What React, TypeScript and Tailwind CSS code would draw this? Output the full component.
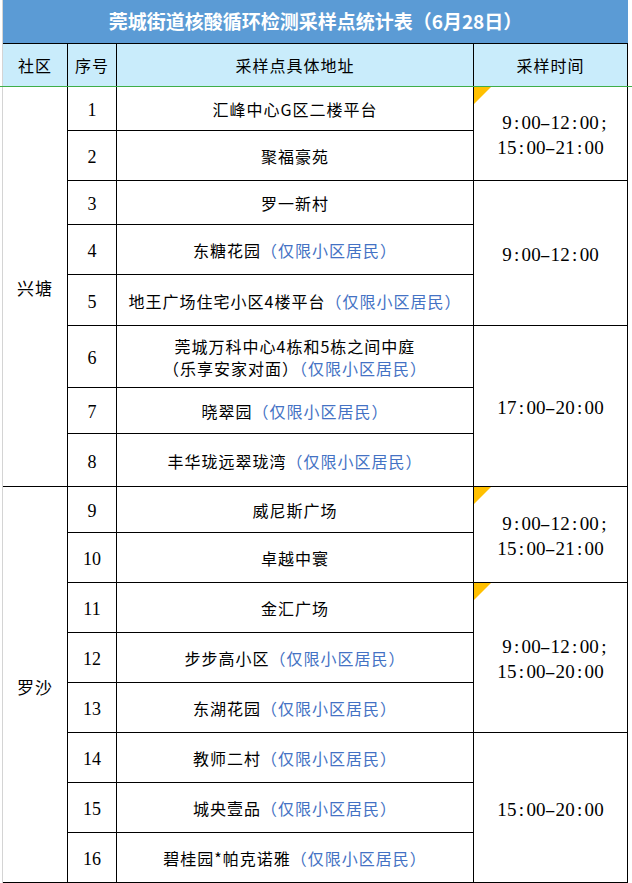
import React from 'react';

type Row = {
	no: number;
	name: string;
	limited?: boolean;
	second?: string;
};

type TimeBlock = {
	span: number;
	lines: string[];
	flag?: boolean;
};

const rows: Row[] = [
	{ no: 1, name: '汇峰中心G区二楼平台' },
	{ no: 2, name: '聚福豪苑' },
	{ no: 3, name: '罗一新村' },
	{ no: 4, name: '东糖花园', limited: true },
	{ no: 5, name: '地王广场住宅小区4楼平台', limited: true },
	{ no: 6, name: '莞城万科中心4栋和5栋之间中庭', second: '（乐享安家对面）', limited: true },
	{ no: 7, name: '晓翠园', limited: true },
	{ no: 8, name: '丰华珑远翠珑湾', limited: true },
	{ no: 9, name: '威尼斯广场' },
	{ no: 10, name: '卓越中寰' },
	{ no: 11, name: '金汇广场' },
	{ no: 12, name: '步步高小区', limited: true },
	{ no: 13, name: '东湖花园', limited: true },
	{ no: 14, name: '教师二村', limited: true },
	{ no: 15, name: '城央壹品', limited: true },
	{ no: 16, name: '碧桂园*帕克诺雅', limited: true },
];

// time cell starts at these row numbers
const times: Record<number, TimeBlock> = {
	1: { span: 2, lines: [' 9:00-12:00;', '15:00-21:00'], flag: true },
	3: { span: 3, lines: ['9:00-12:00'] },
	6: { span: 3, lines: ['17:00-20:00'] },
	9: { span: 2, lines: [' 9:00-12:00;', '15:00-21:00'], flag: true },
	11: { span: 3, lines: [' 9:00-12:00;', '15:00-20:00'], flag: true },
	14: { span: 3, lines: ['15:00-20:00'] },
};

const spanClass: Record<number, string> = {
	2: 'row-span-2',
	3: 'row-span-3',
};

const Mono = ({ text }: { text: string }) => (
	<div className="flex justify-center">
		{text.split('').map((ch, i) => (
			<span
				key={i}
				className="w-[9.7px] text-center"
			>
				{ch === ' ' ? (
					'\u00a0'
				) : ch === '-' ? (
					<span className="inline-block scale-x-[1.7]">-</span>
				) : (
					ch
				)}
			</span>
		))}
	</div>
);

const Flag = () => (
	<svg
		className="absolute left-0 top-0"
		width="17"
		height="17"
		viewBox="0 0 17 17"
	>
		<polygon
			points="0,0 17,0 0,17"
			fill="#ffc000"
		/>
	</svg>
);

const Limited = () => <span className="text-[#4472c4]">（仅限小区居民）</span>;

export default function App() {
	return (
		<div className="w-[632px] h-[883px] bg-white text-black font-['Noto_Sans_CJK_SC',sans-serif] overflow-hidden">
			<div className="flex">
				<div className="w-[2px]" />
				<div className="w-px bg-[#d4d4d4]" />
				<div className="w-[625px]">
					<div className="h-[43px] bg-[#5b9bd5] flex items-center justify-center text-white text-[19px] font-bold">
						莞城街道核酸循环检测采样点统计表（6月28日）
					</div>
					<div className="h-px bg-black" />
					<div className="grid grid-cols-[64px_48px_356px_153px] h-[42px] gap-x-px pr-px bg-black text-[16px] tracking-[1px]">
						<div className="bg-[#c9ecfb] flex items-center justify-center">社区</div>
						<div className="bg-[#c9ecfb] flex items-center justify-center">序号</div>
						<div className="bg-[#c9ecfb] flex items-center justify-center">采样点具体地址</div>
						<div className="bg-[#c9ecfb] flex items-center justify-center">采样时间</div>
					</div>
				</div>
			</div>
			<div className="h-px bg-[#3fae49]" />
			<div className="flex">
				<div className="w-[2px]" />
				<div className="w-px bg-[#d4d4d4]" />
				<div className="grid w-[625px] grid-cols-[64px_48px_356px_153px] grid-rows-[43px_49px_43px_49px_50px_61px_45px_52px_45px_49px_49px_49px_49px_49px_49px_49px] gap-px pr-px pb-px bg-black">
					{rows.map((r) => {
						const t = times[r.no];
						return (
							<React.Fragment key={r.no}>
								{r.no === 1 && (
									<div className="row-span-8 bg-white flex items-center justify-center pt-[3px] text-[17px] tracking-[1px]">
										兴塘
									</div>
								)}
								{r.no === 9 && (
									<div className="row-span-8 bg-white flex items-center justify-center pt-[4px] text-[17px] tracking-[1px]">
										罗沙
									</div>
								)}
								<div className="bg-white flex items-center justify-center pt-[4px] font-['Liberation_Serif',serif] text-[18px]">
									{r.no}
								</div>
								<div className="bg-white flex items-center justify-center text-center text-[16px] tracking-[1px] leading-[22px] pt-[1px]">
									{r.second ? (
										<div>
											{r.name}
											<br />
											{r.second}
											<Limited />
										</div>
									) : (
										<div>
											{r.name}
											{r.limited && <Limited />}
										</div>
									)}
								</div>
								{t && (
									<div
										className={`${spanClass[t.span]} relative bg-white flex flex-col items-center justify-center pt-[3px] font-['Liberation_Serif',serif] text-[19px] leading-[25px]`}
									>
										{t.flag && <Flag />}
										{t.lines.map((l) => (
											<Mono
												key={l}
												text={l}
											/>
										))}
									</div>
								)}
							</React.Fragment>
						);
					})}
				</div>
			</div>
		</div>
	);
}
